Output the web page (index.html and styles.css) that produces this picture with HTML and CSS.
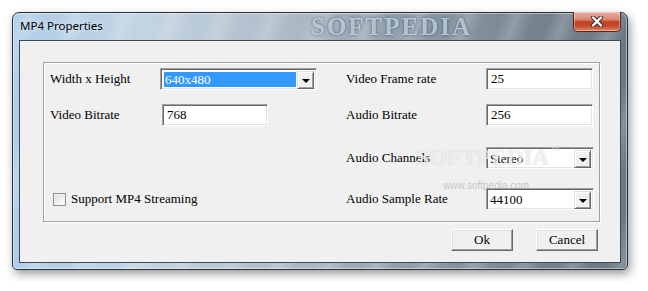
FILE: index.html
```html
<!DOCTYPE html>
<html lang="en">

<head>
    <meta charset="utf-8">
    <title>MP4 Properties</title>
    <link rel="stylesheet" href="styles.css">
</head>

<body>
<div class="desk">
    <div class="window">
        <div class="titlebar">
            <span class="title">MP4 Properties</span>
            <span class="glass-mark">SOFTPEDIA</span>
        </div>
        <div class="close">
            <svg width="14" height="11" viewBox="0 0 14 11">
                <path d="M3 1.5 L11 9.5 M11 1.5 L3 9.5" stroke="#3a2a28" stroke-width="4.2" stroke-linecap="round"/>
                <path d="M3 1.5 L11 9.5 M11 1.5 L3 9.5" stroke="#ffffff" stroke-width="2.4" stroke-linecap="round"/>
            </svg>
        </div>
        <div class="client">
            <div class="group">
                <div class="label r1">Width x Height</div>
                <div class="combo selected wide r1">
                    <div class="value">640x480</div>
                    <div class="drop"><span class="arrow"></span></div>
                </div>
                <div class="label col4 r1">Video Frame rate</div>
                <div class="edit right r1">25</div>

                <div class="label r2">Video Bitrate</div>
                <div class="edit left r2">768</div>
                <div class="label col4 r2">Audio Bitrate</div>
                <div class="edit right r2">256</div>

                <div class="label col4 r3">Audio Channels</div>
                <div class="combo right r3">
                    <div class="value">Stereo</div>
                    <div class="drop"><span class="arrow"></span></div>
                </div>

                <label class="check r4">
                    <span class="box"></span>
                    <span>Support MP4 Streaming</span>
                </label>
                <div class="label col4 r4">Audio Sample Rate</div>
                <div class="combo right r4">
                    <div class="value">44100</div>
                    <div class="drop"><span class="arrow"></span></div>
                </div>
            </div>
            <div class="buttons">
                <div class="button">Ok</div>
                <div class="button">Cancel</div>
            </div>
            <div class="mark">SOFTPEDIA<sup>™</sup></div>
            <div class="mark-url">www.softpedia.com</div>
        </div>
    </div>
</div>
</body>

</html>
```

FILE: styles.css
```css
html, body {
    margin: 0;
    background: #ffffff;
}

.desk {
    padding: 12px;
}

.window {
    position: relative;
    box-sizing: border-box;
    width: 616px;
    height: 258px;
    padding: 0 6px 6px 6px;
    border: 1px solid #26323b;
    border-radius: 7px 7px 5px 5px;
    background:
        repeating-linear-gradient(110deg, rgba(255, 255, 255, 0) 0, rgba(255, 255, 255, 0.18) 14px, rgba(255, 255, 255, 0) 30px, rgba(255, 255, 255, 0) 46px),
        linear-gradient(to right, #aecde9 0%, #c3d3e1 22%, #adbbc7 45%, #8e9da9 65%, #75838e 85%, #6b7883 100%);
    box-shadow: inset 0 0 0 1px rgba(255, 255, 255, 0.45), 2px 4px 10px rgba(0, 0, 0, 0.4);
}

.titlebar {
    position: relative;
    height: 27px;
    overflow: hidden;
}

.title {
    position: relative;
    z-index: 1;
    display: block;
    padding-left: 1px;
    line-height: 26px;
    font-family: "Noto Sans", sans-serif;
    font-size: 11.5px;
    color: #000000;
    text-shadow: 0 0 6px rgba(255, 255, 255, 0.9);
}

.glass-mark {
    position: absolute;
    left: 292px;
    top: 0;
    font-family: "Liberation Serif", serif;
    font-weight: 700;
    font-size: 25px;
    letter-spacing: 2px;
    line-height: 27px;
    color: rgba(210, 224, 238, 0.75);
    text-shadow: 0 0 3px rgba(40, 60, 80, 0.75);
    filter: blur(0.7px);
}

.close {
    position: absolute;
    top: -1px;
    right: 6px;
    box-sizing: border-box;
    width: 48px;
    height: 20px;
    border: 1px solid #5b2418;
    border-top: none;
    border-radius: 0 0 5px 5px;
    background: linear-gradient(#eab0a2 0%, #d98672 40%, #c2401f 52%, #c54a2b 75%, #e08a70 100%);
    box-shadow: inset 0 0 0 1px rgba(255, 255, 255, 0.35);
    display: flex;
    align-items: center;
    justify-content: center;
}

.client {
    position: relative;
    box-sizing: border-box;
    height: 223px;
    padding: 21px 20px 0 23px;
    border: 1px solid #3e4b55;
    background: #f0f0f0;
    font-family: "Liberation Serif", serif;
    font-size: 13px;
    color: #000000;
}

.group {
    display: grid;
    grid-template-columns: 110px 157px 29px 140px 108px;
    grid-template-rows: 22px 14px 22px 21px 22px 19px 22px;
    padding: 5px 4px 11px 6px;
    border: 1px solid #a0a0a0;
    box-shadow: inset 1px 1px 0 #ffffff, 1px 1px 0 #ffffff;
}

.r1 { grid-row: 1; }
.r2 { grid-row: 3; }
.r3 { grid-row: 5; }
.r4 { grid-row: 7; }

.label {
    display: flex;
    align-items: center;
    white-space: nowrap;
}

.col4 {
    grid-column: 4;
}

.edit,
.combo {
    box-sizing: border-box;
    height: 22px;
    border-top: 1px solid #a0a0a0;
    border-left: 1px solid #a0a0a0;
    border-right: 1px solid #ffffff;
    border-bottom: 1px solid #ffffff;
    box-shadow: inset 1px 1px 0 #696969, inset -1px -1px 0 #e3e3e3;
    background: #ffffff;
}

.edit {
    padding-left: 4px;
    line-height: 20px;
}

.edit.left {
    grid-column: 2;
    width: 106px;
    margin-left: 2px;
}

.edit.right {
    width: 107px;
    grid-column: 5;
}

.combo {
    display: flex;
    padding: 2px;
}

.combo.right {
    width: 108px;
    grid-column: 5;
}

.combo.wide {
    grid-column: 2;
    width: 157px;
}

.combo .value {
    flex: 1;
    padding-left: 1px;
    line-height: 18px;
}

.combo.selected .value {
    margin: 1px 1px 0 1px;
    line-height: 16px;
    background: #3399ff;
    color: #ffffff;
}

.combo .drop {
    box-sizing: border-box;
    width: 17px;
    height: 18px;
    border-top: 1px solid #e3e3e3;
    border-left: 1px solid #e3e3e3;
    border-right: 1px solid #696969;
    border-bottom: 1px solid #696969;
    box-shadow: inset 1px 1px 0 #ffffff, inset -1px -1px 0 #a0a0a0;
    background: #f0f0f0;
    display: flex;
    align-items: center;
    justify-content: center;
}

.arrow {
    width: 0;
    height: 0;
    margin-top: 1px;
    border-left: 4px solid transparent;
    border-right: 4px solid transparent;
    border-top: 4px solid #000000;
}

.check {
    grid-column: 1 / 3;
    display: flex;
    align-items: center;
    gap: 5px;
    margin-left: 3px;
}

.check .box {
    box-sizing: border-box;
    width: 13px;
    height: 13px;
    border: 1px solid #8e8f8f;
    background: linear-gradient(135deg, #dcdcdc, #ffffff);
    box-shadow: inset 0 0 0 1px #f4f4f4;
}

.buttons {
    display: flex;
    justify-content: flex-end;
    gap: 23px;
    margin-top: 7px;
    padding-right: 2px;
}

.button {
    box-sizing: border-box;
    width: 62px;
    height: 22px;
    border-top: 1px solid #ffffff;
    border-left: 1px solid #ffffff;
    border-right: 1px solid #696969;
    border-bottom: 1px solid #696969;
    box-shadow: inset -1px -1px 0 #a0a0a0, inset 1px 1px 0 #e3e3e3;
    background: #f0f0f0;
    text-align: center;
    line-height: 20px;
}

.mark {
    position: absolute;
    left: 396px;
    top: 103px;
    font-family: "Liberation Serif", serif;
    font-weight: 700;
    font-size: 24px;
    letter-spacing: -0.5px;
    color: rgba(255, 255, 255, 0.7);
    text-shadow: 0 0 1px rgba(0, 0, 0, 0.2);
    pointer-events: none;
}

.mark sup {
    font-size: 9px;
    font-weight: 400;
    vertical-align: 12px;
    margin-left: 2px;
}

.mark-url {
    position: absolute;
    left: 423px;
    top: 139px;
    font-family: "Liberation Sans", sans-serif;
    font-size: 10px;
    color: rgba(160, 160, 160, 0.55);
    pointer-events: none;
}
```
